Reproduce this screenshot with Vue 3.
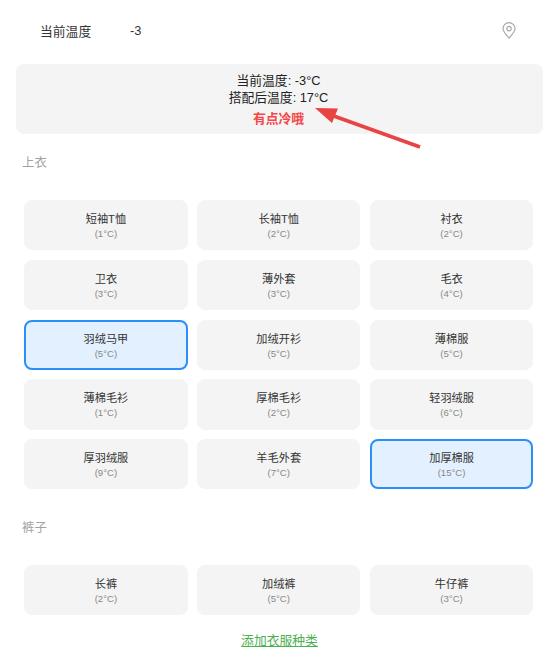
<template>
  <div class="page">
    <div class="temp-row">
      <span class="temp-label">当前温度</span>
      <span class="temp-value">-3</span>
      <svg class="pin" width="14" height="17" viewBox="0 0 14 17" fill="none" stroke="#a9a9a9" stroke-width="1.2">
        <path d="M7 16C4.2 13 1 10 1 6.6a6 6 0 0 1 12 0C13 10 9.8 13 7 16z" />
        <circle cx="7" cy="6.6" r="2.2" />
      </svg>
    </div>

    <div class="summary">
      <div class="summary-line">当前温度: -3°C</div>
      <div class="summary-line">搭配后温度: 17°C</div>
      <div class="summary-tip">有点冷哦</div>
    </div>

    <div class="section" v-for="group in groups" :key="group.title">
      <div class="section-title">{{ group.title }}</div>
      <div class="grid">
        <div
          v-for="item in group.items"
          :key="item.name"
          class="cloth"
          :class="{ active: item.active }"
        >
          <div class="cloth-name">{{ item.name }}</div>
          <div class="cloth-temp">({{ item.temp }}°C)</div>
        </div>
      </div>
    </div>

    <div class="add-row"><a class="add-link">添加衣服种类</a></div>

    <svg class="arrow" width="110" height="45" viewBox="0 0 110 45">
      <path d="M105 39L16 7" stroke="#e94343" stroke-width="3.8" />
      <path d="M0 0L23 0.5L17 15z" fill="#e94343" />
    </svg>
  </div>
</template>

<script setup>
const groups = [
  {
    title: "上衣",
    items: [
      { name: "短袖T恤", temp: 1 },
      { name: "长袖T恤", temp: 2 },
      { name: "衬衣", temp: 2 },
      { name: "卫衣", temp: 3 },
      { name: "薄外套", temp: 3 },
      { name: "毛衣", temp: 4 },
      { name: "羽绒马甲", temp: 5, active: true },
      { name: "加绒开衫", temp: 5 },
      { name: "薄棉服", temp: 5 },
      { name: "薄棉毛衫", temp: 1 },
      { name: "厚棉毛衫", temp: 2 },
      { name: "轻羽绒服", temp: 6 },
      { name: "厚羽绒服", temp: 9 },
      { name: "羊毛外套", temp: 7 },
      { name: "加厚棉服", temp: 15, active: true },
    ],
  },
  {
    title: "裤子",
    items: [
      { name: "长裤", temp: 2 },
      { name: "加绒裤", temp: 5 },
      { name: "牛仔裤", temp: 3 },
    ],
  },
];
</script>

<style>
html,
body {
  margin: 0;
  background: #fff;
}
</style>

<style scoped>
.page {
  position: relative;
  width: 554px;
  height: 666px;
  overflow: hidden;
  box-sizing: border-box;
  padding: 0 11px 0 16px;
  font-family: "Liberation Sans", "Noto Sans CJK SC", sans-serif;
  color: #333;
}

.temp-row {
  display: flex;
  align-items: center;
  height: 60px;
  padding: 0 27px 0 24px;
  font-size: 12.8px;
}

.temp-label {
  width: 90px;
}

.temp-value {
  flex: 1;
}

.summary {
  margin-top: 4px;
  height: 70px;
  box-sizing: border-box;
  padding: 8px 2px 0 0;
  background: #f4f4f4;
  border-radius: 8px;
  text-align: center;
  font-size: 12.8px;
  color: #222;
}

.summary-line {
  line-height: 17px;
}

.summary-tip {
  margin-top: 4px;
  line-height: 17px;
  font-weight: 700;
  color: #f44747;
}

.section-title {
  padding-left: 6px;
  margin-top: 22px;
  line-height: 14px;
  font-size: 12.4px;
  color: #a3a3a3;
}

.section + .section .section-title {
  margin-top: 31.5px;
}

.grid {
  display: grid;
  grid-template-columns: repeat(3, 1fr);
  gap: 9.6px;
  margin: 30.4px 9.8px 0 8.3px;
}

.cloth {
  box-sizing: border-box;
  height: 50.1px;
  padding-top: 11px;
  border: 1px solid #f4f4f4;
  border-radius: 8px;
  background: #f4f4f4;
  text-align: center;
}

.cloth.active {
  border: 2px solid #2a8ff7;
  padding-top: 10px;
  background: #e3f0ff;
}

.cloth-name {
  line-height: 15px;
  font-size: 11.2px;
  color: #333;
}

.cloth-temp {
  margin-top: 1px;
  line-height: 12px;
  font-size: 9.6px;
  color: #888;
}

.add-row {
  margin-top: 17px;
  text-align: center;
  line-height: 16px;
}

.add-link {
  font-size: 12.8px;
  color: #4caf50;
  text-decoration: underline;
}

.pin {
  display: block;
}

.arrow {
  position: absolute;
  left: 315px;
  top: 108px;
}
</style>
